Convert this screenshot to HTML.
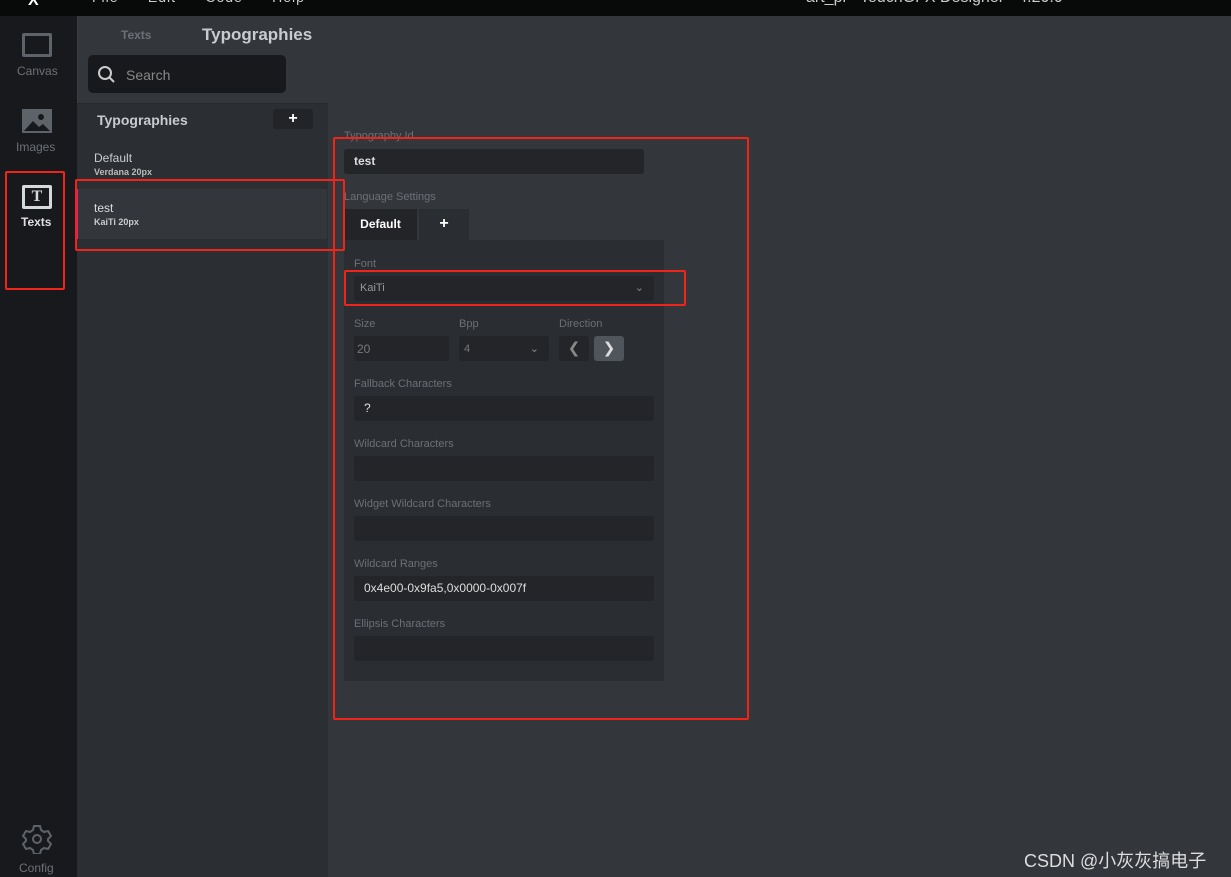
<!DOCTYPE html>
<html><head><meta charset="utf-8"><style>
*{margin:0;padding:0;box-sizing:border-box}
body{width:1231px;height:877px;background:#33363b;font-family:"Liberation Sans","DejaVu Sans",sans-serif;position:relative;overflow:hidden;color:#ccc}
.a{position:absolute}
.lbl{position:absolute;font-size:11px;color:#6c7077;margin-top:5px}
.inp{position:absolute;background:#232529;border-radius:3px;font-size:12px;color:#ddd;padding-left:10px;line-height:25px}
.red{position:absolute;border:2px solid #f02418;border-radius:2px}
</style></head><body>
<div class="a" style="left:0;top:0;width:1231px;height:16px;background:#080a0a"></div>
<div class="a" style="left:28px;top:-8px;color:#fff;font-weight:bold;font-size:16px">X</div>
<div class="a" style="left:92px;top:-11px;color:#ccc;font-size:14px;letter-spacing:1px">File&nbsp;&nbsp;&nbsp;&nbsp;&nbsp;&nbsp;Edit&nbsp;&nbsp;&nbsp;&nbsp;&nbsp;&nbsp;Code&nbsp;&nbsp;&nbsp;&nbsp;&nbsp;&nbsp;Help</div>
<div class="a" style="left:806px;top:-11px;color:#ccc;font-size:16px">art_pi - TouchGFX Designer - 4.20.0</div>
<div class="a" style="left:0;top:16px;width:77px;height:861px;background:#18191c"></div>
<div class="a" style="left:22px;top:33px;width:30px;height:24px;border:3px solid #5e636a;border-radius:2px"></div>
<div class="a" style="left:17px;top:64px;font-size:12px;color:#6c7077">Canvas</div>
<svg class="a" style="left:22px;top:109px" width="30" height="24"><rect width="30" height="24" fill="#5e636a"/><circle cx="19" cy="8" r="3" fill="#18191c"/><path d="M2 22 L11 12 L17 18 L21 15 L28 22Z" fill="#18191c"/></svg>
<div class="a" style="left:16px;top:140px;font-size:12px;color:#6c7077">Images</div>
<div class="a" style="left:22px;top:185px;width:30px;height:24px;border:3px solid #d5d8dc;border-radius:2px;color:#d5d8dc;font:bold 16px 'Liberation Serif',serif;text-align:center;line-height:18px">T</div>
<div class="a" style="left:21px;top:215px;font-size:12px;color:#e0e0e0;font-weight:bold">Texts</div>
<svg class="a" style="left:22px;top:824px" width="30" height="30" viewBox="0 0 30 30"><path d="M12 2h6l1 4 3 2 4-1 3 5-3 3v2l3 3-3 5-4-1-3 2-1 4h-6l-1-4-3-2-4 1-3-5 3-3v-2l-3-3 3-5 4 1 3-2z" fill="none" stroke="#5e636a" stroke-width="2"/><circle cx="15" cy="15" r="4" fill="none" stroke="#5e636a" stroke-width="2"/></svg>
<div class="a" style="left:19px;top:861px;font-size:12px;color:#6c7077">Config</div>
<div class="a" style="left:77px;top:16px;width:1154px;height:87px;background:#33363b;border-left:1px dotted #444"></div>
<div class="a" style="left:121px;top:28px;font-size:12px;color:#6c7077;font-weight:bold">Texts</div>
<div class="a" style="left:202px;top:25px;font-size:17px;color:#c8cbcf;font-weight:bold">Typographies</div>
<div class="a" style="left:88px;top:55px;width:198px;height:38px;background:#18191c;border-radius:5px"></div>
<svg class="a" style="left:97px;top:65px" width="20" height="20"><circle cx="8" cy="8" r="6" fill="none" stroke="#ccc" stroke-width="2"/><path d="M12 12l5 5" stroke="#ccc" stroke-width="2"/></svg>
<div class="a" style="left:126px;top:67px;font-size:14px;color:#888">Search</div>
<div class="a" style="left:77px;top:103px;width:251px;height:774px;background:#2b2e32;border-top:1px solid #26282b"></div>
<div class="a" style="left:97px;top:112px;font-size:14px;color:#c8cbcf;font-weight:bold">Typographies</div>
<div class="a" style="left:273px;top:109px;width:40px;height:20px;background:#222428;border-radius:3px;color:#fff;font-weight:bold;text-align:center;font-size:16px;line-height:19px">+</div>
<div class="a" style="left:94px;top:151px;font-size:12px;color:#ccc">Default</div>
<div class="a" style="left:94px;top:167px;font-size:9px;color:#bbb;font-weight:bold">Verdana 20px</div>
<div class="a" style="left:77px;top:189px;width:250px;height:50px;background:#33363b;border-left:1px solid #e0208a"></div>
<div class="a" style="left:94px;top:201px;font-size:12px;color:#ddd">test</div>
<div class="a" style="left:94px;top:217px;font-size:9px;color:#ccc;font-weight:bold">KaiTi 20px</div>
<div class="lbl" style="left:344px;top:125px">Typography Id</div>
<div class="inp" style="left:344px;top:149px;width:300px;height:25px;font-weight:bold">test</div>
<div class="lbl" style="left:344px;top:186px">Language Settings</div>
<div class="a" style="left:344px;top:209px;width:73px;height:31px;background:#222428;color:#fff;font-size:12px;font-weight:bold;text-align:center;line-height:31px">Default</div>
<div class="a" style="left:419px;top:209px;width:50px;height:31px;background:#2a2d31;color:#fff;font-size:16px;font-weight:bold;text-align:center;line-height:30px">+</div>
<div class="a" style="left:344px;top:240px;width:320px;height:441px;background:#2a2d31"></div>
<div class="lbl" style="left:354px;top:253px">Font</div>
<div class="inp" style="left:354px;top:276px;width:300px;height:25px;color:#999;font-size:11px;padding-left:6px">KaiTi<span style="position:absolute;right:10px;color:#888">⌄</span></div>
<div class="lbl" style="left:354px;top:313px">Size</div>
<div class="lbl" style="left:459px;top:313px">Bpp</div>
<div class="lbl" style="left:559px;top:313px">Direction</div>
<div class="inp" style="left:354px;top:336px;width:95px;height:25px;color:#777;padding-left:3px;line-height:27px">20</div>
<div class="inp" style="left:459px;top:336px;width:90px;height:25px;color:#777;padding-left:5px;font-size:11px;line-height:27px">4<span style="position:absolute;right:10px;color:#888">⌄</span></div>
<div class="a" style="left:559px;top:336px;width:30px;height:25px;background:#232529;border-radius:3px;color:#888;font-weight:bold;text-align:center;line-height:25px;font-size:15px">❮</div>
<div class="a" style="left:594px;top:336px;width:30px;height:25px;background:#50545b;border-radius:3px;color:#ddd;font-weight:bold;text-align:center;line-height:25px;font-size:15px">❯</div>
<div class="lbl" style="left:354px;top:373px">Fallback Characters</div>
<div class="inp" style="left:354px;top:396px;width:300px;height:25px">?</div>
<div class="lbl" style="left:354px;top:433px">Wildcard Characters</div>
<div class="inp" style="left:354px;top:456px;width:300px;height:25px"></div>
<div class="lbl" style="left:354px;top:493px">Widget Wildcard Characters</div>
<div class="inp" style="left:354px;top:516px;width:300px;height:25px"></div>
<div class="lbl" style="left:354px;top:553px">Wildcard Ranges</div>
<div class="inp" style="left:354px;top:576px;width:300px;height:25px">0x4e00-0x9fa5,0x0000-0x007f</div>
<div class="lbl" style="left:354px;top:613px">Ellipsis Characters</div>
<div class="inp" style="left:354px;top:636px;width:300px;height:25px"></div>
<div class="red" style="left:5px;top:171px;width:60px;height:119px"></div>
<div class="red" style="left:75px;top:179px;width:270px;height:72px"></div>
<div class="red" style="left:333px;top:137px;width:416px;height:583px"></div>
<div class="red" style="left:344px;top:270px;width:342px;height:36px"></div>
<div class="a" style="left:1024px;top:847px;font-size:18px;color:#ddd;font-family:'Liberation Sans','Noto Sans CJK SC',sans-serif">CSDN @小灰灰搞电子</div>
</body></html>
